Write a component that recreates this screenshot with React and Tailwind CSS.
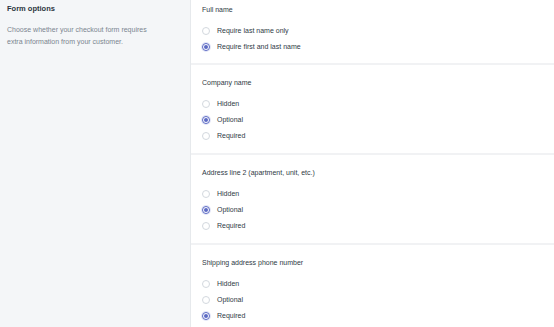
import React, { useState } from 'react';

const sections = [
  { id: 'name', title: 'Full name', options: ['Require last name only', 'Require first and last name'], initial: 1 },
  { id: 'company', title: 'Company name', options: ['Hidden', 'Optional', 'Required'], initial: 1 },
  { id: 'address2', title: 'Address line 2 (apartment, unit, etc.)', options: ['Hidden', 'Optional', 'Required'], initial: 1 },
  { id: 'phone', title: 'Shipping address phone number', options: ['Hidden', 'Optional', 'Required'], initial: 2 },
];

const Radio = ({ checked, label, onSelect }) => (
  <button type="button" onClick={onSelect} className="flex items-center h-[16px] gap-[7px] text-left">
    {checked ? (
      <span className="w-[8px] h-[8px] rounded-full border border-[#5c6ac4] bg-white flex items-center justify-center shadow-[0_0_0_1px_#e3e6f7]">
        <span className="w-[4px] h-[4px] rounded-full bg-[#5c6ac4]" />
      </span>
    ) : (
      <span className="w-[8px] h-[8px] rounded-full border border-[#d3d8de] bg-white" />
    )}
    <span className="text-[#2f3a45]">{label}</span>
  </button>
);

const App = () => {
  const [values, setValues] = useState(
    Object.fromEntries(sections.map(s => [s.id, s.initial]))
  );

  return (
    <div className="flex w-[554px] h-[327px] overflow-hidden bg-white text-[7px] leading-[12px] font-['Liberation_Sans',Arial,sans-serif]">
      {/* Left description */}
      <div className="w-[191px] shrink-0 bg-[#f4f6f8] border-r border-[#e6e9ec] px-[7px] pt-[3px]">
        <h2 className="text-[7.5px] font-bold text-[#2b3540]">Form options</h2>
        <p className="mt-[9px] text-[#7b8590]">
          Choose whether your checkout form requires<br />extra information from your customer.
        </p>
      </div>

      {/* Right settings */}
      <div className="flex-1 -mt-[9px]">
        {sections.map((s, i) => (
          <div
            key={s.id}
            className={`pl-[11px] ${i === 0 ? 'pt-[13px] pb-[8px]' : 'pt-[12px] pb-[9px]'} ${i < sections.length - 1 ? 'border-b-2 border-[#f1f2f4]' : ''}`}
          >
            <div className="text-[#2f3a45]">{s.title}</div>
            <div className="mt-[7px] flex flex-col">
              {s.options.map((opt, j) => (
                <Radio
                  key={opt}
                  label={opt}
                  checked={values[s.id] === j}
                  onSelect={() => setValues(prev => ({ ...prev, [s.id]: j }))}
                />
              ))}
            </div>
          </div>
        ))}
      </div>
    </div>
  );
};

export default App;
